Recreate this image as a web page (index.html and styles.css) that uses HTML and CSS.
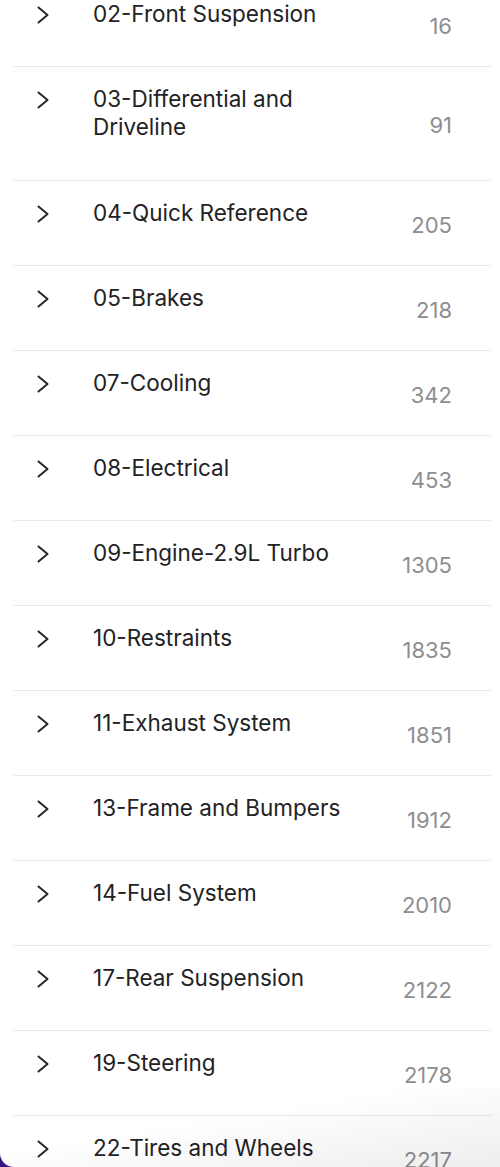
FILE: index.html
```html
<!DOCTYPE html>
<html>
<head>
<meta charset="utf-8">
<link rel="stylesheet" href="styles.css">
</head>
<body>
<div class="window">
  <ul class="list">
    <li class="row"><span class="chev"><svg width="12" height="18" viewBox="0 0 12 18"><path d="M1.5 1.5 L10.5 9 L1.5 16.5" fill="none" stroke="#262628" stroke-width="2" stroke-linecap="round" stroke-linejoin="round"/></svg></span><div class="tb"><div class="title">02-Front Suspension</div><div class="sub"></div></div><span class="count">16</span></li>
    <li class="row"><span class="chev"><svg width="12" height="18" viewBox="0 0 12 18"><path d="M1.5 1.5 L10.5 9 L1.5 16.5" fill="none" stroke="#262628" stroke-width="2" stroke-linecap="round" stroke-linejoin="round"/></svg></span><div class="tb"><div class="title">03-Differential and Driveline</div><div class="sub"></div></div><span class="count">91</span></li>
    <li class="row"><span class="chev"><svg width="12" height="18" viewBox="0 0 12 18"><path d="M1.5 1.5 L10.5 9 L1.5 16.5" fill="none" stroke="#262628" stroke-width="2" stroke-linecap="round" stroke-linejoin="round"/></svg></span><div class="tb"><div class="title">04-Quick Reference</div><div class="sub"></div></div><span class="count">205</span></li>
    <li class="row"><span class="chev"><svg width="12" height="18" viewBox="0 0 12 18"><path d="M1.5 1.5 L10.5 9 L1.5 16.5" fill="none" stroke="#262628" stroke-width="2" stroke-linecap="round" stroke-linejoin="round"/></svg></span><div class="tb"><div class="title">05-Brakes</div><div class="sub"></div></div><span class="count">218</span></li>
    <li class="row"><span class="chev"><svg width="12" height="18" viewBox="0 0 12 18"><path d="M1.5 1.5 L10.5 9 L1.5 16.5" fill="none" stroke="#262628" stroke-width="2" stroke-linecap="round" stroke-linejoin="round"/></svg></span><div class="tb"><div class="title">07-Cooling</div><div class="sub"></div></div><span class="count">342</span></li>
    <li class="row"><span class="chev"><svg width="12" height="18" viewBox="0 0 12 18"><path d="M1.5 1.5 L10.5 9 L1.5 16.5" fill="none" stroke="#262628" stroke-width="2" stroke-linecap="round" stroke-linejoin="round"/></svg></span><div class="tb"><div class="title">08-Electrical</div><div class="sub"></div></div><span class="count">453</span></li>
    <li class="row"><span class="chev"><svg width="12" height="18" viewBox="0 0 12 18"><path d="M1.5 1.5 L10.5 9 L1.5 16.5" fill="none" stroke="#262628" stroke-width="2" stroke-linecap="round" stroke-linejoin="round"/></svg></span><div class="tb"><div class="title">09-Engine-2.9L Turbo</div><div class="sub"></div></div><span class="count">1305</span></li>
    <li class="row"><span class="chev"><svg width="12" height="18" viewBox="0 0 12 18"><path d="M1.5 1.5 L10.5 9 L1.5 16.5" fill="none" stroke="#262628" stroke-width="2" stroke-linecap="round" stroke-linejoin="round"/></svg></span><div class="tb"><div class="title">10-Restraints</div><div class="sub"></div></div><span class="count">1835</span></li>
    <li class="row"><span class="chev"><svg width="12" height="18" viewBox="0 0 12 18"><path d="M1.5 1.5 L10.5 9 L1.5 16.5" fill="none" stroke="#262628" stroke-width="2" stroke-linecap="round" stroke-linejoin="round"/></svg></span><div class="tb"><div class="title">11-Exhaust System</div><div class="sub"></div></div><span class="count">1851</span></li>
    <li class="row"><span class="chev"><svg width="12" height="18" viewBox="0 0 12 18"><path d="M1.5 1.5 L10.5 9 L1.5 16.5" fill="none" stroke="#262628" stroke-width="2" stroke-linecap="round" stroke-linejoin="round"/></svg></span><div class="tb"><div class="title">13-Frame and Bumpers</div><div class="sub"></div></div><span class="count">1912</span></li>
    <li class="row"><span class="chev"><svg width="12" height="18" viewBox="0 0 12 18"><path d="M1.5 1.5 L10.5 9 L1.5 16.5" fill="none" stroke="#262628" stroke-width="2" stroke-linecap="round" stroke-linejoin="round"/></svg></span><div class="tb"><div class="title">14-Fuel System</div><div class="sub"></div></div><span class="count">2010</span></li>
    <li class="row"><span class="chev"><svg width="12" height="18" viewBox="0 0 12 18"><path d="M1.5 1.5 L10.5 9 L1.5 16.5" fill="none" stroke="#262628" stroke-width="2" stroke-linecap="round" stroke-linejoin="round"/></svg></span><div class="tb"><div class="title">17-Rear Suspension</div><div class="sub"></div></div><span class="count">2122</span></li>
    <li class="row"><span class="chev"><svg width="12" height="18" viewBox="0 0 12 18"><path d="M1.5 1.5 L10.5 9 L1.5 16.5" fill="none" stroke="#262628" stroke-width="2" stroke-linecap="round" stroke-linejoin="round"/></svg></span><div class="tb"><div class="title">19-Steering</div><div class="sub"></div></div><span class="count">2178</span></li>
    <li class="row"><span class="chev"><svg width="12" height="18" viewBox="0 0 12 18"><path d="M1.5 1.5 L10.5 9 L1.5 16.5" fill="none" stroke="#262628" stroke-width="2" stroke-linecap="round" stroke-linejoin="round"/></svg></span><div class="tb"><div class="title">22-Tires and Wheels</div><div class="sub"></div></div><span class="count">2217</span></li>
  </ul>
  <div class="fade"></div>
</div>
</body>
</html>
```

FILE: styles.css
```css
html, body {
  margin: 0;
  padding: 0;
}
body {
  background: #3a1580;
  width: 500px;
  height: 1167px;
  overflow: hidden;
  font-family: Inter, "Liberation Sans", sans-serif;
}
.window {
  position: relative;
  width: 500px;
  height: 1167px;
  background: #ffffff;
  border-bottom-left-radius: 14px;
  overflow: hidden;
}
.list {
  list-style: none;
  margin: -18px 9px 0 14px;
  padding: 0;
}
.row {
  display: flex;
  align-items: center;
  padding: 18px 39px 14px 23px;
  border-bottom: 1px solid #e8e8e8;
}
.row:nth-child(2) {
  padding-bottom: 15px;
}
.chev {
  align-self: flex-start;
  display: flex;
  align-items: center;
  height: 28px;
  margin-top: 1px;
  width: 12px;
  margin-right: 44px;
}
.chev svg {
  display: block;
}
.tb {
  flex: 1;
  min-width: 0;
  max-width: 275px;
}
.title {
  font-size: 22.5px;
  line-height: 28px;
  color: #222224;
}
.sub {
  height: 24px;
}
.count {
  margin-left: auto;
  font-size: 22px;
  line-height: 28px;
  color: #8e8e92;
  text-align: right;
}
.fade {
  position: absolute;
  left: 0;
  right: 0;
  bottom: 0;
  height: 80px;
  background: linear-gradient(to bottom right, rgba(0,0,0,0) 40%, rgba(0,0,0,0.07) 100%);
  pointer-events: none;
}
```
